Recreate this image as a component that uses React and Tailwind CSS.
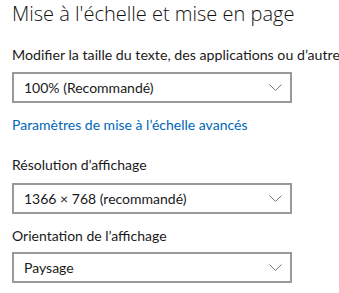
const TITLE_FONT = { fontFamily: '"Open Sans", "Noto Sans", sans-serif' };
const BODY_FONT = { fontFamily: 'Lato, "Open Sans", sans-serif' };

function Chevron() {
  return (
    <svg width="13" height="8" viewBox="0 0 13 8" className="shrink-0">
      <path d="M0.5 0.5 L6.5 6.5 L12.5 0.5" fill="none" stroke="#777" strokeWidth="1" />
    </svg>
  );
}

function Select({ value }) {
  return (
    <div className="w-[280px] h-[31px] border-2 border-[#999999] flex items-center justify-between pl-[10px] pr-[8px] text-[14px] text-[#1a1a1a]">
      <span>{value}</span>
      <Chevron />
    </div>
  );
}

export default function App() {
  return (
    <div className="w-[339px] h-[293px] bg-white overflow-hidden pl-3 pt-[1px]" style={BODY_FONT}>
      <h1 className="text-[20px] font-light text-[#111] whitespace-nowrap leading-[26px]" style={TITLE_FONT}>
        Mise à l'échelle et mise en page
      </h1>

      <p className="mt-[18px] text-[14.2px] text-[#1a1a1a] whitespace-nowrap leading-[20px]">
        Modifier la taille du texte, des applications ou d’autres éléments
      </p>
      <div className="mt-[7px]">
        <Select value="100% (Recommandé)" />
      </div>

      <p className="mt-[12px] text-[14px] text-[#0067b8] whitespace-nowrap leading-[20px]">
        Paramètres de mise à l’échelle avancés
      </p>

      <p className="mt-[20px] text-[14px] text-[#1a1a1a] whitespace-nowrap leading-[20px]">
        Résolution d’affichage
      </p>
      <div className="mt-[8px]">
        <Select value="1366 × 768 (recommandé)" />
      </div>

      <p className="mt-[12px] text-[14px] text-[#1a1a1a] whitespace-nowrap leading-[20px]">
        Orientation de l’affichage
      </p>
      <div className="mt-[6px]">
        <Select value="Paysage" />
      </div>
    </div>
  );
}
